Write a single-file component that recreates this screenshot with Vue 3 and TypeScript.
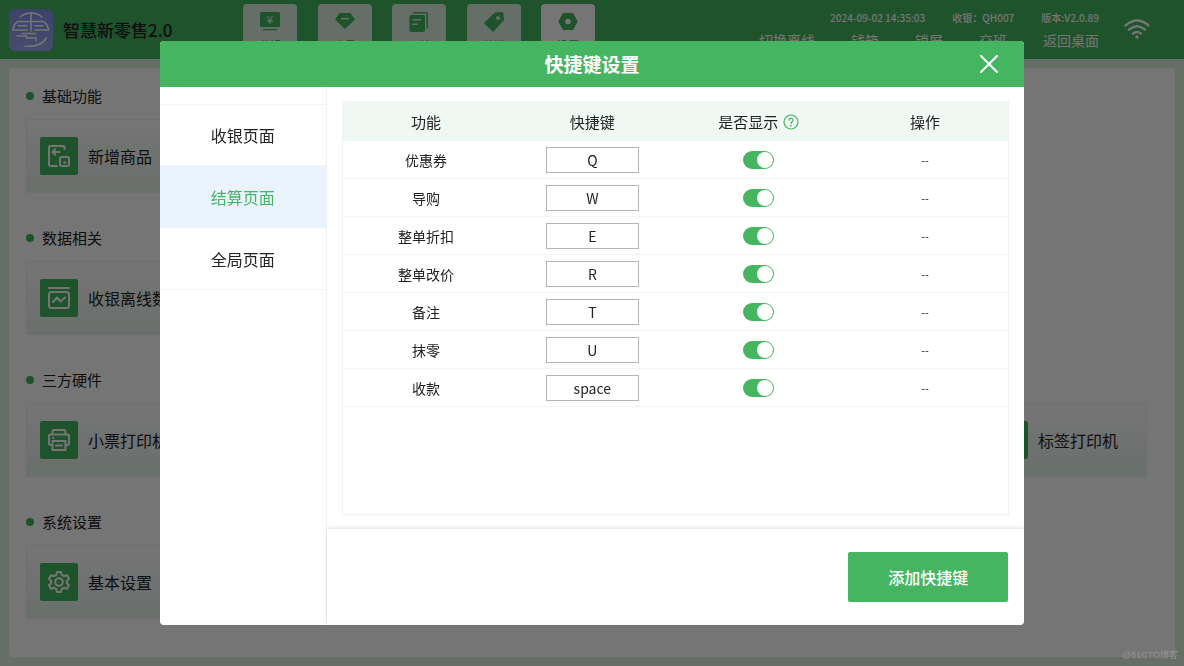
<script setup lang="ts">
import { ref } from 'vue'

type IconName = 'goods' | 'chart' | 'printer' | 'gear'

interface Card {
  label: string
  icon: IconName
  last?: boolean
}

interface Shortcut {
  name: string
  key: string
  visible: boolean
}

const tabs = [
  { id: 'cash', label: '收银' },
  { id: 'member', label: '会员' },
  { id: 'order', label: '订单' },
  { id: 'promo', label: '营销' },
  { id: 'setting', label: '设置' },
]
const activeTab = ref('setting')

const status = ['2024-09-02 14:35:03', '收银：QH007', '版本:V2.0.89']
const actions = ['切换离线', '钱箱', '锁屏', '交班', '返回桌面']

const sections: { title: string; cards: Card[] }[] = [
  { title: '基础功能', cards: [{ label: '新增商品', icon: 'goods' }] },
  { title: '数据相关', cards: [{ label: '收银离线数据', icon: 'chart' }] },
  {
    title: '三方硬件',
    cards: [
      { label: '小票打印机', icon: 'printer' },
      { label: '标签打印机', icon: 'printer', last: true },
    ],
  },
  { title: '系统设置', cards: [{ label: '基本设置', icon: 'gear' }] },
]

const pages = ['收银页面', '结算页面', '全局页面']
const activePage = ref('结算页面')

const shortcuts = ref<Shortcut[]>([
  { name: '优惠券', key: 'Q', visible: true },
  { name: '导购', key: 'W', visible: true },
  { name: '整单折扣', key: 'E', visible: true },
  { name: '整单改价', key: 'R', visible: true },
  { name: '备注', key: 'T', visible: true },
  { name: '抹零', key: 'U', visible: true },
  { name: '收款', key: 'space', visible: true },
])
</script>

<template>
  <div class="app">
    <header class="topbar">
      <div class="brand">
        <svg class="logo" viewBox="0 0 44 42" aria-hidden="true">
          <defs>
            <linearGradient id="logoFill" x1="0" y1="0" x2="0" y2="1">
              <stop offset="0" stop-color="#8490ec" />
              <stop offset="1" stop-color="#9ba8ea" />
            </linearGradient>
          </defs>
          <rect width="44" height="42" rx="6" fill="url(#logoFill)" />
          <g fill="none" stroke="#fff" stroke-width="1.5" stroke-linecap="round">
            <path d="M11 8C17 2.500 27 2.500 33 8" />
            <path d="M22 4V22" />
            <path d="M4 21C4.500 17 6 14 9 12.500H34C37.500 14 39 17 39.500 21" />
            <path d="M9 16.800H18M26 16.800H34" />
            <path d="M4 21H18M26 21H39.500" />
            <path d="M13 24.500H26.500M8 27H17.500V29H27V32" />
            <path d="M37.500 29C34 35 27 38 16 37.200" />
          </g>
        </svg>
        <span class="brand-name">智慧新零售2.0</span>
      </div>
      <nav class="tabs">
        <button
          v-for="tab in tabs"
          :key="tab.id"
          type="button"
          class="tab"
          :class="{ active: activeTab === tab.id }"
          @click="activeTab = tab.id"
        >
          <svg class="tab-icon" viewBox="0 0 20 20" fill="currentColor" aria-hidden="true">
            <template v-if="tab.id === 'cash'">
              <rect x="0" y="0" width="20" height="15" rx="1.5" />
              <rect x="3" y="17" width="14" height="1.3" />
              <text class="cut-text" x="10" y="11.5" text-anchor="middle">¥</text>
            </template>
            <template v-else-if="tab.id === 'member'">
              <path d="M4.500 1H15.500L20 7.500L10 17L0 7.500Z" stroke-linejoin="round" />
              <rect class="cut" x="6" y="6" width="8" height="1.500" />
            </template>
            <template v-else-if="tab.id === 'order'">
              <path d="M4 0H17Q19 0 19 2V16.500H17.400V1.600H4Z" />
              <rect x="0.500" y="3" width="15.500" height="17" rx="1.500" />
              <path class="cut" d="M3.500 7H12V8.500H3.500ZM3.500 11.500H8.500V13H3.500Z" />
            </template>
            <template v-else-if="tab.id === 'promo'">
              <path
                d="M11 0.600L18 0Q19.200 0 19.400 1.400L20 8L10 19Q9 20 8 19L0.600 12Q-0.200 11 0.800 10Z"
              />
              <circle class="cut" cx="14" cy="6" r="2" />
            </template>
            <template v-else>
              <path d="M5.500 1H14.500Q15.200 1 15.600 1.700L19.700 9.500L15.600 17.300Q15.200 18 14.500 18H5.500Q4.800 18 4.400 17.300L0.300 9.500L4.400 1.700Q4.800 1 5.500 1Z" />
              <circle class="cut" cx="10" cy="9.500" r="2.800" />
            </template>
          </svg>
          <span>{{ tab.label }}</span>
        </button>
      </nav>
      <div class="info">
        <div class="status">
          <span v-for="item in status" :key="item">{{ item }}</span>
        </div>
        <div class="actions">
          <button v-for="item in actions" :key="item" type="button">{{ item }}</button>
        </div>
      </div>
      <svg class="wifi" viewBox="0 0 26 20" aria-hidden="true">
        <g fill="none" stroke="currentColor" stroke-width="2.400" stroke-linecap="round">
          <path d="M1.500 6.500Q13 -3.500 24.500 6.500" />
          <path d="M5 10.700Q13 4 21 10.700" />
          <path d="M9 14.500Q13 11.500 17 14.500" />
        </g>
        <circle cx="13" cy="18" r="1.700" fill="currentColor" />
      </svg>
    </header>

    <main class="panel">
      <section v-for="section in sections" :key="section.title" class="section">
        <h2>{{ section.title }}</h2>
        <div class="cards">
          <button
            v-for="card in section.cards"
            :key="card.label"
            type="button"
            class="card"
            :class="{ last: card.last }"
          >
            <span class="card-icon">
              <svg viewBox="0 0 22 22" aria-hidden="true">
                <g
                  fill="none"
                  stroke="currentColor"
                  stroke-width="2"
                  stroke-linecap="round"
                  stroke-linejoin="round"
                >
                  <template v-if="card.icon === 'goods'">
                    <path d="M16.500 4V2.500Q16.500 1 15 1H2.500Q1 1 1 2.500V19.500Q1 21 2.500 21H9" />
                    <path d="M11.500 7H4.500M7.200 4.300L4.500 7L7.200 9.700" />
                    <rect x="12" y="12" width="9" height="9" rx="1.500" />
                    <path d="M16 17.500H17.500" />
                  </template>
                  <template v-else-if="card.icon === 'chart'">
                    <path d="M1 1H21" />
                    <rect x="1" y="5" width="20" height="16" rx="2.500" />
                    <path d="M5 15L9 10.500L12.500 14.500L17 10.500" />
                  </template>
                  <template v-else-if="card.icon === 'printer'">
                    <path d="M4.500 5.500V2.500Q4.500 1 6 1H16Q17.500 1 17.500 2.500V5.500" />
                    <path d="M4.500 16H2.500Q1 16 1 14.500V7Q1 5.500 2.500 5.500H19.500Q21 5.500 21 7V14.500Q21 16 19.500 16H17.500" />
                    <path d="M4.500 12H17.500V21H4.500ZM8 16.500H14M5 9H5.500" />
                  </template>
                  <template v-else>
                    <path
                      d="M9 1H13L13.800 4L16 5.200L19 4.300L21 7.800L18.800 10V12L21 14.200L19 17.700L16 16.800L13.800 18L13 21H9L8.200 18L6 16.800L3 17.700L1 14.200L3.200 12V10L1 7.800L3 4.300L6 5.200L8.200 4Z"
                    />
                    <circle cx="11" cy="11" r="3.800" />
                  </template>
                </g>
              </svg>
            </span>
            <span>{{ card.label }}</span>
          </button>
        </div>
      </section>
    </main>

    <div class="overlay">
      <div class="dialog" role="dialog" aria-modal="true" aria-labelledby="dialog-title">
        <header class="dialog-head">
          <h1 id="dialog-title">快捷键设置</h1>
          <button type="button" class="close" aria-label="关闭">
            <svg viewBox="0 0 18 18" aria-hidden="true">
              <path d="M1 1L17 17M17 1L1 17" stroke="currentColor" stroke-width="2" stroke-linecap="round" />
            </svg>
          </button>
        </header>
        <div class="dialog-body">
          <nav class="pages">
            <button
              v-for="page in pages"
              :key="page"
              type="button"
              :class="{ active: activePage === page }"
              @click="activePage = page"
            >
              {{ page }}
            </button>
          </nav>
          <div class="content">
            <div class="table-area">
              <div class="table-box">
                <table>
                  <thead>
                    <tr>
                      <th scope="col">功能</th>
                      <th scope="col">快捷键</th>
                      <th scope="col">
                        <span class="with-help">
                          是否显示
                          <svg viewBox="0 0 16 16" aria-hidden="true">
                            <g fill="none" stroke="currentColor" stroke-width="1.200" stroke-linecap="round">
                              <circle cx="8" cy="8" r="7" />
                              <path d="M6 6.300Q6 4.300 8 4.300T10 6.200Q10 7.300 8.900 7.900Q8 8.400 8 9.500" />
                            </g>
                            <circle cx="8" cy="11.600" r="0.900" fill="currentColor" />
                          </svg>
                        </span>
                      </th>
                      <th scope="col">操作</th>
                    </tr>
                  </thead>
                  <tbody>
                    <tr v-for="row in shortcuts" :key="row.name">
                      <td>{{ row.name }}</td>
                      <td>
                        <input v-model="row.key" class="key" type="text" :aria-label="row.name + '快捷键'" />
                      </td>
                      <td>
                        <input v-model="row.visible" class="switch" type="checkbox" :aria-label="row.name + '是否显示'" />
                      </td>
                      <td class="none">--</td>
                    </tr>
                  </tbody>
                </table>
              </div>
            </div>
            <footer class="dialog-foot">
              <button type="button" class="add">添加快捷键</button>
            </footer>
          </div>
        </div>
      </div>
    </div>
    <span class="watermark">@51CTO博客</span>
  </div>
</template>

<style>
body {
  margin: 0;
}
</style>

<style scoped>
.app {
  --green: #45b561;
  --mint: #dcf2e2;
  display: flex;
  flex-direction: column;
  box-sizing: border-box;
  min-height: 100vh;
  background: var(--mint);
  color: #222;
  font-family: 'Noto Sans CJK SC', sans-serif;
}
button,
input {
  margin: 0;
  padding: 0;
  border: 0;
  background: none;
  color: inherit;
  font: inherit;
}
button {
  cursor: pointer;
}
h1,
h2 {
  margin: 0;
}
svg {
  display: block;
}

.topbar {
  display: flex;
  align-items: flex-start;
  box-sizing: border-box;
  height: 59px;
  padding: 0 34px 0 9px;
  background: var(--green);
}
.brand {
  display: flex;
  align-items: center;
  gap: 10px;
  width: 234px;
  height: 59px;
}
.logo {
  width: 44px;
  height: 42px;
}
.brand-name {
  font-size: 17px;
  font-weight: 500;
  white-space: nowrap;
}
.tabs {
  display: flex;
  justify-content: space-between;
  width: 352px;
  padding-top: 4px;
}
.tab {
  display: flex;
  flex-direction: column;
  align-items: center;
  gap: 5px;
  width: 54px;
  height: 51px;
  padding-top: 8px;
  border-radius: 4px;
  background: var(--mint);
  color: var(--green);
  font-size: 11px;
  font-weight: 500;
  line-height: 16px;
}
.tab.active {
  background: #fff;
}
.tab-icon {
  width: 20px;
  height: 20px;
}
.cut,
.cut-text {
  fill: var(--mint);
}
.active .cut {
  fill: #fff;
}
.cut-text {
  font-size: 11px;
  font-weight: 500;
}
.info {
  display: flex;
  flex: 1;
  flex-direction: column;
  align-items: flex-end;
  gap: 4px;
  padding-top: 10px;
  color: #fff;
  white-space: nowrap;
}
.status {
  display: flex;
  gap: 27px;
  font-size: 10px;
  font-weight: 500;
  line-height: 16px;
}
.actions {
  display: flex;
  gap: 36px;
  font-size: 14px;
  line-height: 20px;
}
.wifi {
  width: 26px;
  height: 20px;
  margin: 19px 0 0 25px;
  color: #fff;
}

.panel {
  flex: 1;
  margin: 9px;
  padding: 16px 28px 17px 17px;
  border-radius: 4px;
  background: #fff;
}
.section {
  margin-bottom: 33px;
}
.section:last-child {
  margin-bottom: 0;
}
h2 {
  display: flex;
  align-items: center;
  gap: 8px;
  margin-bottom: 11px;
  font-size: 15px;
  font-weight: 400;
  line-height: 24px;
}
h2::before {
  width: 8px;
  height: 8px;
  border-radius: 50%;
  background: var(--green);
  content: '';
}
.cards {
  display: grid;
  grid-template-columns: repeat(6, 1fr);
  gap: 19px;
}
.card {
  display: flex;
  align-items: center;
  gap: 10px;
  box-sizing: border-box;
  min-width: 0;
  height: 74px;
  padding-left: 13px;
  border: 1px solid #eef4f0;
  border-radius: 2px;
  background: linear-gradient(#fff, #e6f2ea);
  font-size: 16px;
  white-space: nowrap;
}
.card.last {
  grid-column: 6;
}
.card-icon {
  display: grid;
  flex: none;
  place-items: center;
  width: 38px;
  height: 38px;
  border-radius: 2px;
  background: var(--green);
  color: #fff;
}
.card-icon svg {
  width: 22px;
  height: 22px;
}

.overlay {
  position: fixed;
  inset: 0;
  display: flex;
  align-items: center;
  justify-content: center;
  background: rgba(0, 0, 0, 0.54);
}
.dialog {
  display: flex;
  flex-direction: column;
  width: 73%;
  height: calc(100% - 82px);
  border-radius: 4px;
  background: #fff;
  overflow: hidden;
}
.dialog-head {
  display: grid;
  grid-template-columns: 1fr auto 1fr;
  align-items: center;
  height: 46px;
  padding: 0 26px;
  background: var(--green);
  color: #fff;
}
h1 {
  grid-column: 2;
  font-size: 19px;
  font-weight: 700;
  line-height: 28px;
}
.close {
  justify-self: end;
}
.close svg {
  width: 18px;
  height: 18px;
}
.dialog-body {
  display: flex;
  flex: 1;
  min-height: 0;
}
.pages {
  display: flex;
  flex-direction: column;
  box-sizing: border-box;
  width: 167px;
  padding-top: 17px;
  border-right: 1px solid #f1f1f1;
}
.pages button {
  height: 62px;
  border-bottom: 1px solid #f4f4f4;
  font-size: 16px;
}
.pages button:first-child {
  border-top: 1px solid #f4f4f4;
}
.pages button.active {
  background: #eaf4fe;
  color: var(--green);
}
.content {
  display: flex;
  flex: 1;
  flex-direction: column;
  min-width: 0;
}
.table-area {
  display: flex;
  flex: 1;
  min-height: 0;
  padding: 14px 15px;
}
.table-box {
  flex: 1;
  border: 1px solid #f1f1f1;
  overflow: auto;
}
table {
  width: 100%;
  border-collapse: separate;
  border-spacing: 0;
  table-layout: fixed;
}
th,
td {
  box-sizing: border-box;
  padding: 0;
  text-align: center;
}
th {
  height: 39px;
  background: #f0f8f4;
  font-size: 15px;
  font-weight: 400;
}
td {
  height: 38px;
  border-bottom: 1px solid #f3f3f3;
  font-size: 14px;
}
.with-help {
  display: flex;
  align-items: center;
  justify-content: center;
  gap: 5px;
}
.with-help svg {
  width: 16px;
  height: 16px;
  color: var(--green);
}
.key {
  display: block;
  box-sizing: border-box;
  width: 93px;
  height: 26px;
  margin: 0 auto;
  border: 1px solid #b5b5b5;
  font-size: 14px;
  text-align: center;
}
.switch {
  display: block;
  box-sizing: border-box;
  width: 31px;
  height: 18px;
  margin: 0 auto;
  padding: 1px;
  border-radius: 9px;
  background: #ccc;
  appearance: none;
  cursor: pointer;
}
.switch::before {
  display: block;
  width: 16px;
  height: 16px;
  border-radius: 50%;
  background: #fff;
  content: '';
}
.switch:checked {
  background: var(--green);
}
.switch:checked::before {
  margin-left: auto;
}
td.none {
  font-size: 11px;
}
.dialog-foot {
  display: flex;
  align-items: center;
  justify-content: flex-end;
  height: 96px;
  padding-right: 16px;
  box-shadow: 0 -1px 4px rgba(0, 0, 0, 0.12);
}
.add {
  width: 160px;
  height: 50px;
  border-radius: 2px;
  background: var(--green);
  color: #fff;
  font-size: 16px;
  font-weight: 500;
}
.watermark {
  position: fixed;
  right: 6px;
  bottom: 4px;
  color: #949494;
  font-family: 'Liberation Sans', 'Noto Sans CJK SC', sans-serif;
  font-size: 9px;
  line-height: 14px;
}
</style>
